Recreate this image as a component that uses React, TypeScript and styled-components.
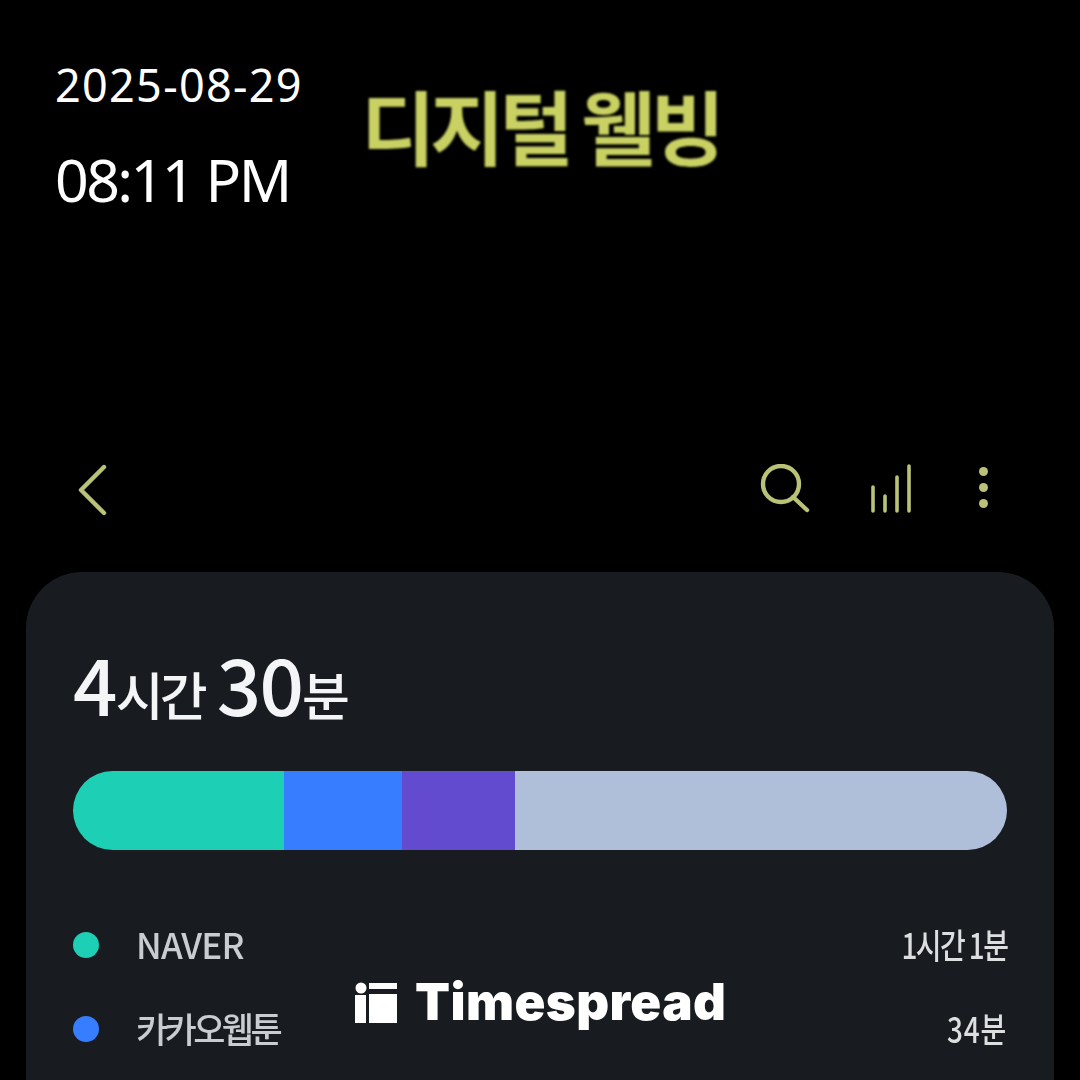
import styled, { createGlobalStyle } from "styled-components";

const KR = `"Noto Sans CJK KR", "Noto Sans", sans-serif`;

const usage = [
  { name: "NAVER", nameTracking: -0.8, time: "1시간 1분", timeTracking: -2, color: "#1dcfb4", width: 211 },
  { name: "카카오웹툰", nameTracking: -3.6, time: "34분", timeTracking: 1, color: "#367dff", width: 118 },
];

const App = () => {
  return (
    <Page>
      <GlobalStyle />
      <Header>
        <Stamp>
          <StampDate>2025-08-29</StampDate>
          <StampTime>08:11 PM</StampTime>
        </Stamp>
        <Title>디지털 웰빙</Title>
      </Header>

      <Toolbar>
        <IconSvg width="30" height="52" viewBox="0 0 30 52">
          <path d="M26 3 L3 26 L26 49" />
        </IconSvg>
        <ToolbarRight>
          <IconSvg width="50" height="50" viewBox="0 0 50 50">
            <circle cx="21" cy="20" r="18" />
            <path d="M33 33 L47 46" />
          </IconSvg>
          <BarsIcon width="42" height="50" viewBox="0 0 42 50">
            <path d="M3 47 V23 M15 47 V32 M27 47 V13 M39 47 V2" />
          </BarsIcon>
          <Dots>
            <Dot />
            <Dot />
            <Dot />
          </Dots>
        </ToolbarRight>
      </Toolbar>

      <Card>
        <Total>
          <Big>4</Big>
          <Small>시간</Small>
          <Big $gap>30</Big>
          <Small>분</Small>
        </Total>

        <Bar>
          {usage.map((u) => (
            <Segment key={u.name} $color={u.color} $width={u.width} />
          ))}
          <Segment $color="#634bcf" $width={113} />
          <Segment $color="#b0bfd9" $grow />
        </Bar>

        <List>
          {usage.map((u) => (
            <Row key={u.name}>
              <Bullet $color={u.color} />
              <AppName $tracking={u.nameTracking}>{u.name}</AppName>
              <AppTime $tracking={u.timeTracking}>{u.time}</AppTime>
            </Row>
          ))}
        </List>
      </Card>

      <Watermark>
        <svg width="42" height="42" viewBox="0 0 42 42" fill="#fff">
          <circle cx="6" cy="7" r="5.5" />
          <rect x="0" y="14" width="11" height="28" />
          <rect x="14" y="2" width="28" height="6" />
          <rect x="14" y="13" width="28" height="29" />
        </svg>
        <WatermarkText>Timespread</WatermarkText>
      </Watermark>
    </Page>
  );
};

const GlobalStyle = createGlobalStyle`
  html, body {
    margin: 0;
    padding: 0;
    background: #000;
  }
`;

const Page = styled.div`
  position: relative;
  display: flex;
  flex-direction: column;
  width: 1080px;
  height: 1080px;
  overflow: hidden;
  background: #000;
`;

const Header = styled.header`
  display: flex;
  align-items: flex-start;
  height: 464px;
  padding-left: 55px;
  box-sizing: border-box;
`;

const Stamp = styled.div`
  display: flex;
  flex-direction: column;
  width: 306px;
  padding-top: 50px;
  gap: 20px;
  color: #fff;
  font-family: "Noto Sans", sans-serif;
  white-space: nowrap;
`;

const StampDate = styled.div`
  font-size: 45px;
  line-height: 70px;
  height: 70px;
  font-weight: 400;
  letter-spacing: 1.3px;
`;

const StampTime = styled.div`
  font-size: 59px;
  line-height: 78px;
  font-weight: 400;
  letter-spacing: -2.6px;
`;

const Title = styled.h1`
  margin: 64px 0 0;
  color: #c9d163;
  font-family: ${KR};
  font-size: 81px;
  line-height: 120px;
  font-weight: 600;
  letter-spacing: -5.4px;
  white-space: nowrap;
  filter: blur(1px);
`;

const Toolbar = styled.div`
  display: flex;
  justify-content: space-between;
  height: 108px;
  padding: 0 92px 0 78px;
  box-sizing: border-box;
`;

const ToolbarRight = styled.div`
  display: flex;
  align-items: flex-start;
  gap: 60px;
  margin-left: auto;
`;

const IconSvg = styled.svg`
  fill: none;
  stroke: #b9c276;
  stroke-width: 4.4;
  stroke-linecap: round;
  stroke-linejoin: round;
  filter: blur(0.5px);
`;

const BarsIcon = styled(IconSvg)`
  stroke-width: 3.6;
`;

const Dots = styled.div`
  display: flex;
  flex-direction: column;
  gap: 7px;
  margin-left: 7px;
  padding-top: 3px;
`;

const Dot = styled.span`
  width: 9px;
  height: 9px;
  border-radius: 50%;
  background: #b9c276;
`;

const Card = styled.section`
  flex: 1;
  margin: 0 26px;
  padding: 72px 47px 0;
  box-sizing: border-box;
  background: #181b20;
  border-radius: 56px 56px 0 0;
`;

const Total = styled.div`
  display: flex;
  align-items: baseline;
  height: 127px;
  margin-top: -7px;
  padding-bottom: 7px;
  color: #f4f5f6;
  font-family: ${KR};
  white-space: nowrap;
  filter: blur(0.7px);
`;

const Big = styled.span<{ $gap?: boolean }>`
  font-size: 78px;
  line-height: 90px;
  font-weight: 500;
  letter-spacing: -1.8px;
  margin-left: ${(p) => (p.$gap ? "13px" : "0")};
`;

const Small = styled.span`
  font-size: 52px;
  font-weight: 500;
  letter-spacing: -3.8px;
`;

const Bar = styled.div`
  display: flex;
  height: 79px;
  border-radius: 40px;
  overflow: hidden;
`;

const Segment = styled.div<{ $color: string; $width?: number; $grow?: boolean }>`
  flex: ${(p) => (p.$grow ? "1" : `0 0 ${p.$width}px`)};
  background: ${(p) => p.$color};
`;

const List = styled.div`
  display: flex;
  flex-direction: column;
  gap: 34px;
  margin-top: 70px;
`;

const Row = styled.div`
  display: flex;
  align-items: center;
  height: 50px;
  font-family: ${KR};
  font-size: 35px;
  font-weight: 500;
  color: #c9ccd0;
  filter: blur(0.6px);
`;

const Bullet = styled.span<{ $color: string }>`
  flex: 0 0 26px;
  height: 26px;
  border-radius: 50%;
  background: ${(p) => p.$color};
`;

const AppName = styled.span<{ $tracking: number }>`
  margin: 0 0 4px 37px;
  letter-spacing: ${(p) => p.$tracking}px;
`;

const AppTime = styled.span<{ $tracking: number }>`
  margin: 0 0 4px auto;
  color: #dcdee0;
  letter-spacing: ${(p) => p.$tracking}px;
  transform: scaleX(0.8);
  transform-origin: right center;
`;

const Watermark = styled.div`
  position: absolute;
  left: 355px;
  top: 980px;
  display: flex;
  align-items: center;
  gap: 18px;
`;

const WatermarkText = styled.span`
  color: #fff;
  font-family: Inter, "Liberation Sans", sans-serif;
  font-size: 51px;
  line-height: 44px;
  font-weight: 900;
  letter-spacing: 0.4px;
`;

export default App;
